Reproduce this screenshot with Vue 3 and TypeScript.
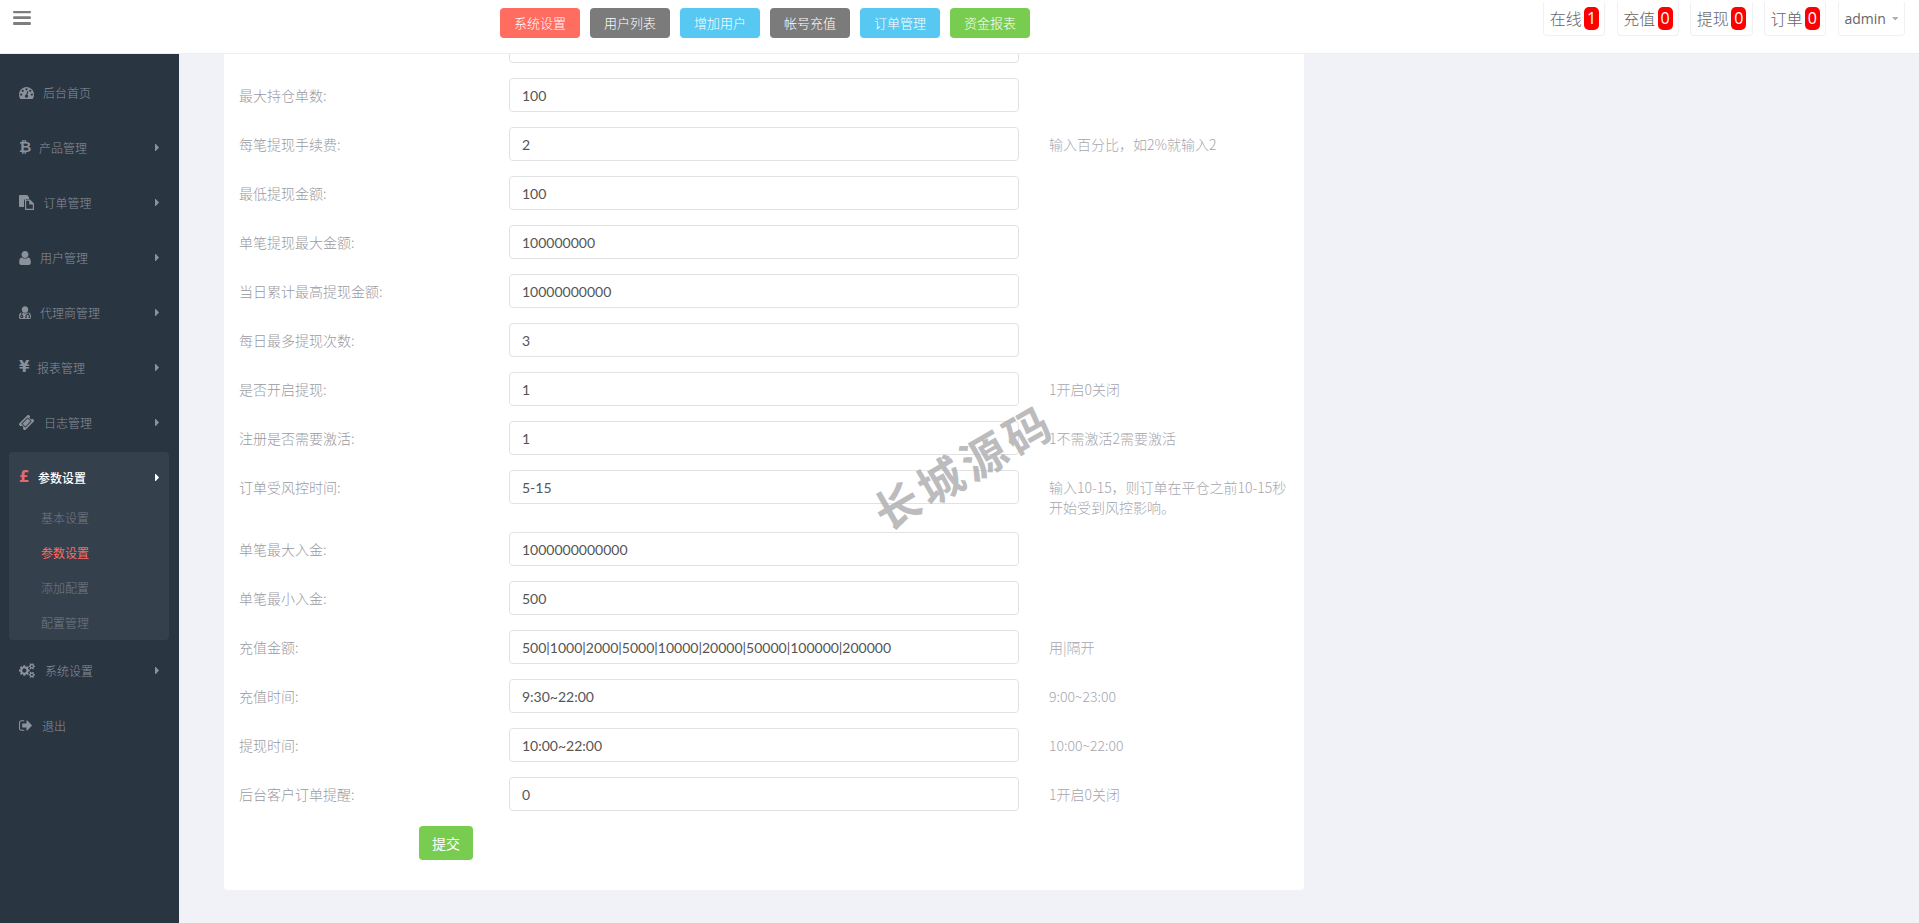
<script setup lang="ts">
interface Glyph { box: string; d: string; w: number; h: number }

const glyphs: Record<string, Glyph> = {
  dashboard: { box: '0 256 1792 1408', w: 15, h: 12, d: 'M384 1152q0-53-37.5-90.5t-90.5-37.5-90.5 37.5-37.5 90.5 37.5 90.5 90.5 37.5 90.5-37.5 37.5-90.5zm192-448q0-53-37.5-90.5t-90.5-37.5-90.5 37.5-37.5 90.5 37.5 90.5 90.5 37.5 90.5-37.5 37.5-90.5zm428 481l101-382q6-26-7.5-48.5t-38.5-29.5-48 6.5-30 39.5l-101 382q-60 5-107 43.5t-63 98.5q-20 77 20 146t117 89 146-20 89-117q16-60-6-117t-72-91zm660-33q0-53-37.5-90.5t-90.5-37.5-90.5 37.5-37.5 90.5 37.5 90.5 90.5 37.5 90.5-37.5 37.5-90.5zm-640-640q0-53-37.5-90.5t-90.5-37.5-90.5 37.5-37.5 90.5 37.5 90.5 90.5 37.5 90.5-37.5 37.5-90.5zm448 192q0-53-37.5-90.5t-90.5-37.5-90.5 37.5-37.5 90.5 37.5 90.5 90.5 37.5 90.5-37.5 37.5-90.5zm320 448q0 261-141 483-19 29-54 29h-1402q-35 0-54-29-141-221-141-483 0-182 71-348t191-286 286-191 348-71 348 71 286 191 191 286 71 348z' },
  files: { box: '0 0 15 15', w: 15, h: 15, d: 'M1 0H8L10 2V4H7.2Q5 4 5 6.2V12H1Q0 12 0 11V1Q0 0 1 0ZM6 4.5H11L15 8.5V15H6ZM7.2 5.7V13.8H13.8V9.4H10.2V5.7Z' },
  user: { box: '256 128 1280 1536', w: 12, h: 14, d: 'M1536 1399q0 109-62.5 187t-150.5 78h-854q-88 0-150.5-78t-62.5-187q0-85 8.5-160.5t31.5-152 58.5-131 94-89 134.5-34.5q131 128 313 128t313-128q76 0 134.5 34.5t94 89 58.5 131 31.5 152 8.5 160.5zm-256-887q0 159-112.5 271.5t-271.5 112.5-271.5-112.5-112.5-271.5 112.5-271.5 271.5-112.5 271.5 112.5 112.5 271.5z' },
  agent: { box: '192 128 1408 1536', w: 12, h: 13, d: 'M576 1376q0 26-19 45t-45 19-45-19-19-45 19-45 45-19 45 19 19 45zm1024 69q0 121-73 190t-194 69h-874q-121 0-194-69t-73-190q0-68 5.5-131t24-138 47.5-132.5 81-103 120-60.5q-22 52-22 120v203q-58 20-93 70t-35 111q0 80 56 136t136 56 136-56 56-136q0-61-35.5-111t-92.5-70v-203q0-62 25-93 132 104 295 104t295-104q25 31 25 93v64q-106 0-181 75t-75 181v89q-32 29-32 71 0 40 28 68t68 28 68-28 28-68q0-42-32-71v-89q0-52 38-90t90-38 90 38 38 90v89q-32 29-32 71 0 40 28 68t68 28 68-28 28-68q0-42-32-71v-89q0-68-34.5-127.5t-93.5-93.5q0-10 .5-42.5t0-48-2.5-41.5-7-47-13-40q68 15 120 60.5t81 103 47.5 132.5 24 138 5.5 131zm-320-893q0 159-112.5 271.5t-271.5 112.5-271.5-112.5-112.5-271.5 112.5-271.5 271.5-112.5 271.5 112.5 112.5 271.5z' },
  ticket: { box: '64 64 1664 1664', w: 15, h: 15, d: 'M1024 452l316 316-572 572-316-316zm-211 979l618-618q19-19 19-45t-19-45l-362-362q-18-18-45-18t-45 18l-618 618q-19 19-19 45t19 45l362 362q18 18 45 18t45-18zm889-637l-907 908q-37 37-90.5 37t-90.5-37l-126-126q56-56 56-136t-56-136-136-56-136 56l-125-126q-37-37-37-90.5t37-90.5l907-906q37-37 90.5-37t90.5 37l125 125q-56 56-56 136t56 136 136 56 136-56l126 125q37 37 37 90.5t-37 90.5z' },
  cogs: { box: '0 0 1920 1792', w: 16, h: 15, d: 'M896 896q0-106-75-181t-181-75-181 75-75 181 75 181 181 75 181-75 75-181zm768 512q0-52-38-90t-90-38-90 38-38 90q0 53 37.5 90.5t90.5 37.5 90.5-37.5 37.5-90.5zm0-1024q0-52-38-90t-90-38-90 38-38 90q0 53 37.5 90.5t90.5 37.5 90.5-37.5 37.5-90.5zm-384 421v185q0 10-7 19.5t-16 10.5l-155 24q-11 35-32 76 34 48 90 115 7 11 7 20 0 12-7 19-23 30-82.5 89.5t-78.5 59.5q-11 0-21-7l-115-90q-37 19-77 31-11 108-23 155-7 24-30 24h-186q-11 0-20-7.5t-10-17.5l-23-153q-34-10-75-31l-118 89q-7 7-20 7-11 0-21-8-144-133-144-160 0-9 7-19 10-14 41-53t47-61q-23-44-35-82l-152-24q-10-1-17-9.5t-7-19.5v-185q0-10 7-19.5t16-10.5l155-24q11-35 32-76-34-48-90-115-7-11-7-20 0-12 7-20 22-30 82-89t79-59q11 0 21 7l115 90q34-18 77-32 11-108 23-154 7-24 30-24h186q11 0 20 7.5t10 17.5l23 153q34 10 75 31l118-89q8-7 20-7 11 0 21 8 144 133 144 160 0 8-7 19-12 16-42 54t-45 60q23 48 34 82l152 23q10 2 17 10.5t7 19.5zm640 533v140q0 16-149 31-12 27-30 52 51 113 51 138 0 4-4 7-122 71-124 71-8 0-46-47t-52-68q-20 2-30 2t-30-2q-14 21-52 68t-46 47q-2 0-124-71-4-3-4-7 0-25 51-138-18-25-30-52-149-15-149-31v-140q0-16 149-31 13-29 30-52-51-113-51-138 0-4 4-7 4-2 35-20t59-34 30-16q8 0 46 46.5t52 67.5q20-2 30-2t30 2q51-71 92-112l6-2q4 0 124 70 4 3 4 7 0 25-51 138 17 23 30 52 149 15 149 31zm0-1024v140q0 16-149 31-12 27-30 52 51 113 51 138 0 4-4 7-122 71-124 71-8 0-46-47t-52-68q-20 2-30 2t-30-2q-14 21-52 68t-46 47q-2 0-124-71-4-3-4-7 0-25 51-138-18-25-30-52-149-15-149-31v-140q0-16 149-31 13-29 30-52-51-113-51-138 0-4 4-7 4-2 35-20t59-34 30-16q8 0 46 46.5t52 67.5q20-2 30-2t30 2q51-71 92-112l6-2q4 0 124 70 4 3 4 7 0 25-51 138 17 23 30 52 149 15 149 31z' },
  signout: { box: '64 256 1568 1280', w: 13, h: 11, d: 'M704 1440q0 4 1 20t.5 26.5-3 23.5-10 19.5-20.5 6.5h-320q-119 0-203.5-84.5t-84.5-203.5v-704q0-119 84.5-203.5t203.5-84.5h320q13 0 22.5 9.5t9.5 22.5q0 4 1 20t.5 26.5-3 23.5-10 19.5-20.5 6.5h-320q-66 0-113 47t-47 113v704q0 66 47 113t113 47h288l11.5 1 11.5 3 8 5.5 7 9 2 13.5zm928-544q0 26-19 45l-544 544q-19 19-45 19t-45-19-19-45v-288h-448q-26 0-45-19t-19-45v-384q0-26 19-45t45-19h448v-288q0-26 19-45t45-19 45 19l544 544q19 19 19 45z' },
}

const caretRight = 'M1152 896q0 26-19 45l-448 448q-19 19-45 19t-45-19-19-45v-896q0-26 19-45t45-19 45 19l448 448q19 19 19 45z'
const caretDown = 'M1408 704q0 26-19 45l-448 448q-19 19-45 19t-45-19l-448-448q-19-19-19-45t19-45 45-19h896q26 0 45 19t19 45z'
const barsPath = 'M1664 1344v128q0 26-19 45t-45 19h-1408q-26 0-45-19t-19-45v-128q0-26 19-45t45-19h1408q26 0 45 19t19 45zm0-512v128q0 26-19 45t-45 19h-1408q-26 0-45-19t-19-45v-128q0-26 19-45t45-19h1408q26 0 45 19t19 45zm0-512v128q0 26-19 45t-45 19h-1408q-26 0-45-19t-19-45v-128q0-26 19-45t45-19h1408q26 0 45 19t19 45z'

interface MenuItem { label: string; icon?: string; char?: string; slot: number; arrow: boolean; active?: boolean }

const menuTop: MenuItem[] = [
  { label: '后台首页', icon: 'dashboard', slot: 24, arrow: false },
  { label: '产品管理', char: '₿', slot: 20, arrow: true },
  { label: '订单管理', icon: 'files', slot: 24.5, arrow: true },
  { label: '用户管理', icon: 'user', slot: 21, arrow: true },
  { label: '代理商管理', icon: 'agent', slot: 21, arrow: true },
  { label: '报表管理', char: '¥', slot: 18, arrow: true },
  { label: '日志管理', icon: 'ticket', slot: 25, arrow: true },
]
const activeItem: MenuItem = { label: '参数设置', char: '£', slot: 19, arrow: true, active: true }
const subItems = [
  { label: '基本设置', on: false },
  { label: '参数设置', on: true },
  { label: '添加配置', on: false },
  { label: '配置管理', on: false },
]
const menuBottom: MenuItem[] = [
  { label: '系统设置', icon: 'cogs', slot: 26, arrow: true },
  { label: '退出', icon: 'signout', slot: 23, arrow: false },
]

const shortcuts = [
  { label: '系统设置', tone: 'red' },
  { label: '用户列表', tone: 'grey' },
  { label: '增加用户', tone: 'blue' },
  { label: '帐号充值', tone: 'grey' },
  { label: '订单管理', tone: 'blue' },
  { label: '资金报表', tone: 'green' },
]

const counters = [
  { label: '在线', count: 1 },
  { label: '充值', count: 0 },
  { label: '提现', count: 0 },
  { label: '订单', count: 0 },
]

const rows = [
  { label: '', value: '', help: '' },
  { label: '最大持仓单数:', value: '100', help: '' },
  { label: '每笔提现手续费:', value: '2', help: '输入百分比，如2%就输入2' },
  { label: '最低提现金额:', value: '100', help: '' },
  { label: '单笔提现最大金额:', value: '100000000', help: '' },
  { label: '当日累计最高提现金额:', value: '10000000000', help: '' },
  { label: '每日最多提现次数:', value: '3', help: '' },
  { label: '是否开启提现:', value: '1', help: '1开启0关闭' },
  { label: '注册是否需要激活:', value: '1', help: '1不需激活2需要激活' },
  { label: '订单受风控时间:', value: '5-15', help: '输入10-15，则订单在平仓之前10-15秒\n开始受到风控影响。' },
  { label: '单笔最大入金:', value: '1000000000000', help: '' },
  { label: '单笔最小入金:', value: '500', help: '' },
  { label: '充值金额:', value: '500|1000|2000|5000|10000|20000|50000|100000|200000', help: '用|隔开' },
  { label: '充值时间:', value: '9:30~22:00', help: '9:00~23:00' },
  { label: '提现时间:', value: '10:00~22:00', help: '10:00~22:00' },
  { label: '后台客户订单提醒:', value: '0', help: '1开启0关闭' },
]
</script>

<template>
  <div class="app">
    <header class="topbar">
      <svg class="bars" viewBox="128 320 1536 1216" width="18" height="14" aria-hidden="true"><path :d="barsPath" /></svg>
      <nav class="shortcuts">
        <a v-for="s in shortcuts" :key="s.label" class="shortcut" :class="s.tone">{{ s.label }}</a>
      </nav>
      <div class="status">
        <div v-for="c in counters" :key="c.label" class="chip">
          <span>{{ c.label }}</span><b class="badge">{{ c.count }}</b>
        </div>
        <div class="chip account">
          <span>admin</span>
          <svg viewBox="320 576 960 640" width="8" height="5" aria-hidden="true"><path :d="caretDown" /></svg>
        </div>
      </div>
    </header>

    <div class="body">
      <aside class="sidebar">
        <a v-for="m in menuTop" :key="m.label" class="item">
          <span class="slot" :style="{ width: m.slot + 'px' }">
            <svg v-if="m.icon" :viewBox="glyphs[m.icon].box" :width="glyphs[m.icon].w" :height="glyphs[m.icon].h" aria-hidden="true"><path :d="glyphs[m.icon].d" /></svg>
            <i v-else class="glyph">{{ m.char }}</i>
          </span>
          <span>{{ m.label }}</span>
          <svg v-if="m.arrow" class="arrow" viewBox="576 384 576 1024" width="4" height="9" aria-hidden="true"><path :d="caretRight" /></svg>
        </a>

        <div class="open-group">
          <a class="item current">
            <span class="slot" :style="{ width: activeItem.slot + 'px' }"><i class="glyph">{{ activeItem.char }}</i></span>
            <span>{{ activeItem.label }}</span>
            <svg class="arrow" viewBox="576 384 576 1024" width="4" height="9" aria-hidden="true"><path :d="caretRight" /></svg>
          </a>
          <a v-for="s in subItems" :key="s.label" class="sub" :class="{ on: s.on }">{{ s.label }}</a>
        </div>

        <a v-for="m in menuBottom" :key="m.label" class="item">
          <span class="slot" :style="{ width: m.slot + 'px' }">
            <svg :viewBox="glyphs[m.icon!].box" :width="glyphs[m.icon!].w" :height="glyphs[m.icon!].h" aria-hidden="true"><path :d="glyphs[m.icon!].d" /></svg>
          </span>
          <span>{{ m.label }}</span>
          <svg v-if="m.arrow" class="arrow" viewBox="576 384 576 1024" width="4" height="9" aria-hidden="true"><path :d="caretRight" /></svg>
        </a>
      </aside>

      <main class="main">
        <section class="card">
          <div v-for="(r, i) in rows" :key="i" class="row">
            <label class="label">{{ r.label }}</label>
            <input class="field" type="text" readonly :value="r.value" />
            <p class="help">{{ r.help }}</p>
          </div>
          <button class="submit" type="button">提交</button>
        </section>
      </main>
    </div>

    <div class="watermark">长城源码</div>
  </div>
</template>

<style>
html, body { margin: 0; background: #f1f2f7; overflow: hidden; }
</style>

<style scoped>
.app {
  position: relative;
  height: 100vh;
  display: flex;
  flex-direction: column;
  overflow: hidden;
  background: #f1f2f7;
  font-family: "Noto Sans CJK SC", "Open Sans", sans-serif;
  font-weight: 300;
}
.topbar {
  position: relative;
  z-index: 2;
  flex: 0 0 54px;
  box-sizing: border-box;
  display: flex;
  align-items: flex-start;
  background: #fff;
  border-bottom: 1px solid #eceef2;
}
.bars { margin: 11px 0 0 13px; fill: #7d7d7d; }
.shortcuts { display: flex; gap: 10px; margin: 8px 0 0 469px; }
.shortcut {
  width: 80px;
  height: 30px;
  border-radius: 4px;
  color: #fff;
  font-size: 13px;
  line-height: 30px;
  text-align: center;
}
.red { background: #ff6c60; }
.grey { background: #7b7b7b; }
.blue { background: #57c8f2; }
.green { background: #78cd51; }
.status { display: flex; gap: 11.3px; margin-left: auto; padding-right: 14.5px; }
.chip {
  box-sizing: border-box;
  flex: none;
  width: 62.3px;
  height: 36px;
  padding: 0 5.5px;
  display: flex;
  align-items: center;
  gap: 2.5px;
  border: 1px solid #f1f1f3;
  border-top-color: transparent;
  border-radius: 4px;
  color: #666;
  font-size: 16px;
  white-space: nowrap;
}
.badge {
  width: 15px;
  height: 23px;
  border-radius: 5px;
  background: #f00;
  color: #fff;
  font-family: "Open Sans", sans-serif;
  font-weight: 400;
  font-size: 16px;
  line-height: 23px;
  text-align: center;
}
.account {
  width: 67px;
  padding: 0 6px;
  gap: 6px;
  font-family: "Open Sans", sans-serif;
  font-weight: 400;
  font-size: 14px;
  color: #666;
}
.account svg { fill: #b0b0b0; }
.body { flex: 1; min-height: 0; display: flex; }
.sidebar {
  flex: 0 0 179px;
  box-sizing: border-box;
  padding-top: 11px;
  background: #2a3542;
  color: #8a919a;
  font-size: 12px;
}
.item {
  height: 55px;
  box-sizing: border-box;
  padding: 0 20px 0 19px;
  display: flex;
  align-items: center;
}
.slot { display: inline-flex; align-items: center; flex: none; }
.slot svg { fill: #8a919a; }
.glyph {
  font-family: "DejaVu Sans", sans-serif;
  font-style: normal;
  font-weight: 700;
  font-size: 15px;
  line-height: 1;
  color: #8a919a;
}
.arrow { margin-left: auto; fill: #8a919a; }
.open-group {
  margin: 2px 10px 3px 9px;
  border-radius: 4px;
  background: #35404d;
}
.current {
  height: 48px;
  padding: 2px 10px 0 10px;
  color: #fff;
  font-weight: 500;
}
.current .glyph { color: #e26a70; }
.current .arrow { fill: #fff; }
.sub {
  display: block;
  height: 35px;
  padding-left: 32px;
  line-height: 35px;
  color: #727c87;
}
.sub.on { color: #ff6c60; font-weight: 400; }
.main { flex: 1; min-width: 0; overflow: hidden; padding-left: 45px; }
.card {
  box-sizing: border-box;
  width: 1080px;
  margin-top: -25px;
  padding: 0 15px 30px;
  background: #fff;
  border-radius: 4px;
}
.row {
  display: grid;
  grid-template-columns: 270px 510px 240px;
  align-items: start;
  margin-bottom: 15px;
}
.label {
  padding-top: 7px;
  font-size: 14px;
  line-height: 20px;
  color: #9a9aa2;
}
.field {
  box-sizing: border-box;
  width: 510px;
  height: 34px;
  padding: 0 12px;
  border: 1px solid #e2e2e4;
  border-radius: 4px;
  background: #fff;
  outline: none;
  font-family: Lato, "Open Sans", sans-serif;
  font-size: 14px;
  color: #555;
}
.help {
  margin: 0 0 0 30px;
  padding-top: 7px;
  font-size: 14px;
  line-height: 20px;
  white-space: pre;
  color: #a6a6ae;
}
.submit {
  display: block;
  width: 54px;
  height: 34px;
  margin-left: 180px;
  padding: 0;
  border: 0;
  border-radius: 4px;
  background: #78cd51;
  color: #fff;
  font-family: inherit;
  font-weight: 400;
  font-size: 14px;
}
.watermark {
  position: absolute;
  left: 963px;
  top: 465px;
  z-index: 3;
  transform: translate(-50%, -50%) rotate(-30deg);
  font-family: "Noto Sans CJK SC", sans-serif;
  font-weight: 700;
  font-size: 45px;
  letter-spacing: 5px;
  line-height: 1;
  white-space: nowrap;
  color: rgba(170, 170, 172, 0.8);
  pointer-events: none;
}
</style>
